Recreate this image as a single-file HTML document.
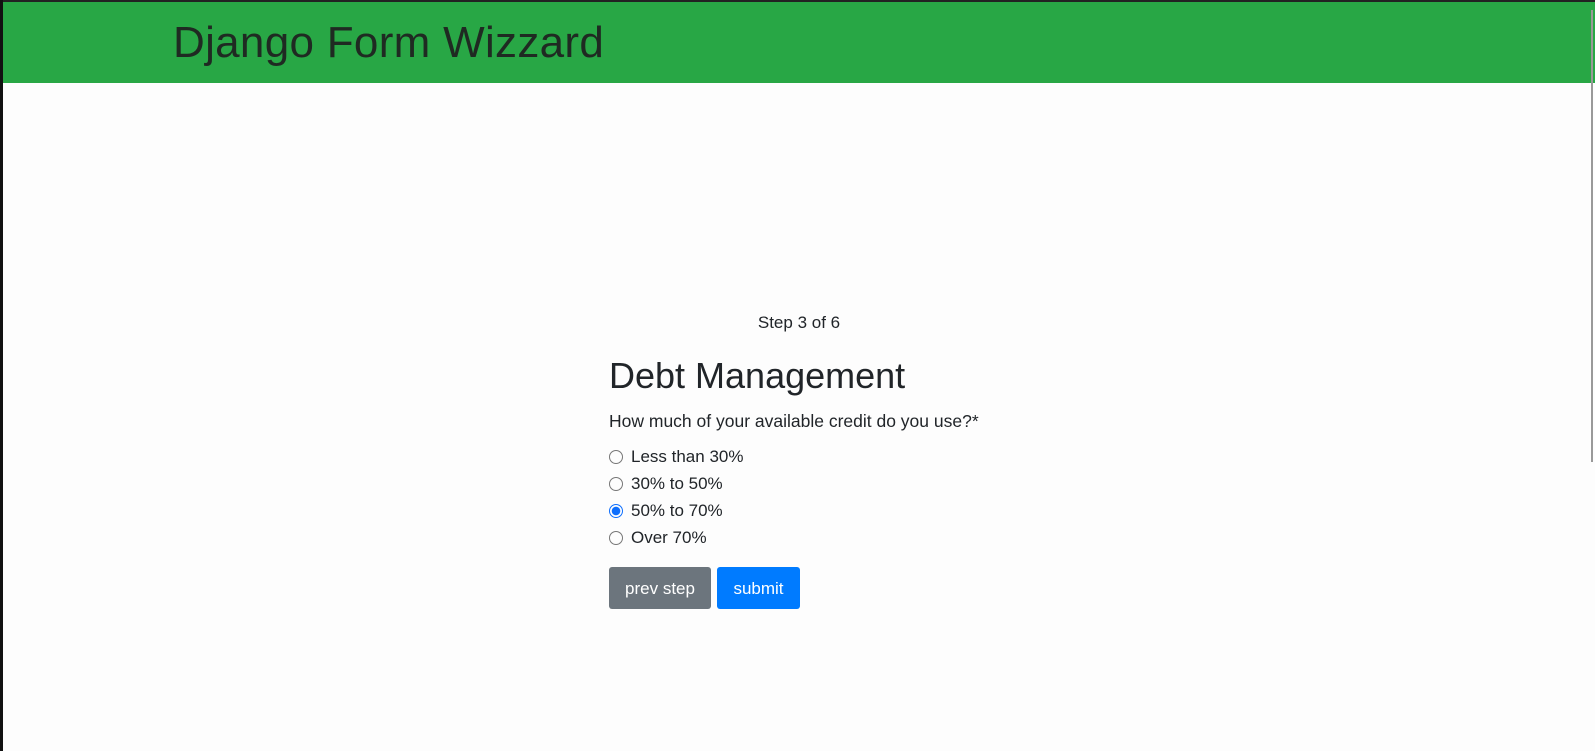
<!DOCTYPE html>
<html><head><style>
body{margin:0;width:1595px;height:751px;background:#fdfdfd;font-family:"Liberation Sans",sans-serif;color:#212529;position:relative;overflow:hidden}
.top{position:absolute;left:0;top:0;width:1595px;height:2px;background:#222}
.left{position:absolute;left:0;top:0;width:3px;height:751px;background:#111}
.hdr{position:absolute;left:3px;top:2px;width:1592px;height:81px;background:#28a745}
.hdr h1{margin:0;position:absolute;left:170px;top:16px;font-weight:normal;font-size:44px;color:#1f2a22;letter-spacing:0.3px}
.sb{position:absolute;left:1591px;top:10px;width:2px;height:452px;background:#999}
.step{position:absolute;left:0;width:1598px;text-align:center;top:313px;font-size:17px}
h2{position:absolute;left:609px;top:355px;margin:0;font-weight:normal;font-size:36px}
.q{position:absolute;left:609px;top:411px;font-size:17.5px}
.r{position:absolute;left:609px;font-size:17px;display:flex;align-items:center}
.r i{display:inline-block;width:14px;height:14px;border:1px solid #777;border-radius:50%;margin-right:8px;box-sizing:border-box}
.r i.on{border:1px solid #0d6efd;background:radial-gradient(circle,#0d6efd 0 4px,#fff 4.5px)}
.b{position:absolute;top:567px;height:42px;color:#fff;font-size:17px;line-height:44px;text-align:center;border-radius:3px}
</style></head><body>
<div class="hdr"><h1>Django Form Wizzard</h1></div>
<div class="top"></div><div class="left"></div>
<div class="sb"></div>
<div class="step">Step 3 of 6</div>
<h2>Debt Management</h2>
<div class="q">How much of your available credit do you use?*</div>
<div class="r" style="top:447px"><i></i>Less than 30%</div>
<div class="r" style="top:474px"><i></i>30% to 50%</div>
<div class="r" style="top:501px"><i class="on"></i>50% to 70%</div>
<div class="r" style="top:528px"><i></i>Over 70%</div>
<div class="b" style="left:609px;width:102px;background:#6c757d">prev step</div>
<div class="b" style="left:717px;width:83px;background:#007bff">submit</div>
</body></html>
